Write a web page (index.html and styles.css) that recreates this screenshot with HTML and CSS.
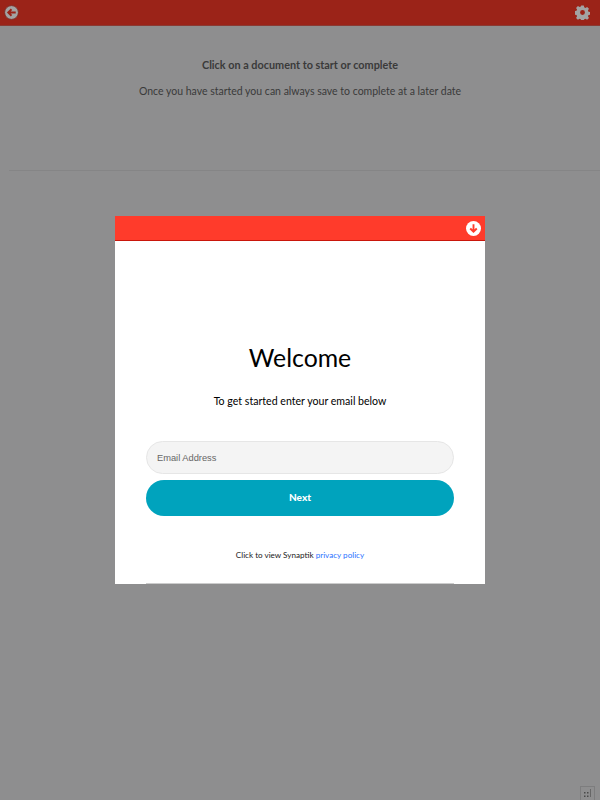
FILE: index.html
```html
<!DOCTYPE html>
<html lang="en">
<head>
    <meta charset="UTF-8">
    <meta name="viewport" content="width=device-width, initial-scale=1.0">
    <title>Documents</title>
    <link rel="stylesheet" href="styles.css">
</head>
<body>
    <div class="top-bar">
        <svg class="top-icon" width="15" height="15" viewBox="0 0 16 16">
            <circle cx="8" cy="8" r="7.4" fill="#a3a3a3" stroke="#7d2a22" stroke-width="1"/>
            <path d="M12.5 8H5M8 4.5L4.5 8L8 11.5" fill="none" stroke="#9b2318" stroke-width="2"/>
        </svg>
        <svg class="top-icon" width="15" height="15" viewBox="0 0 16 16">
            <path fill="#a3a3a3" fill-rule="evenodd" d="M6.6 0.5h2.8l.4 2 1.3.6 1.8-1.1 2 2-1.1 1.8.6 1.3 2 .4v2.8l-2 .4-.6 1.3 1.1 1.8-2 2-1.8-1.1-1.3.6-.4 2H6.6l-.4-2-1.3-.6-1.8 1.1-2-2 1.1-1.8-.6-1.3-2-.4V6.6l2-.4.6-1.3L1.1 3.1l2-2 1.8 1.1 1.3-.6zM8 5.4a2.6 2.6 0 1 0 0 5.2a2.6 2.6 0 0 0 0-5.2z"/>
        </svg>
    </div>

    <div class="intro">
        <p class="intro-title">Click on a document to start or complete</p>
        <p class="intro-sub">Once you have started you can always save to complete at a later date</p>
    </div>
    <div class="divider"></div>

    <div class="overlay">
        <div class="modal">
            <div class="modal-header">
                <svg width="15" height="15" viewBox="0 0 16 16">
                    <circle cx="8" cy="8" r="8" fill="#fff"/>
                    <path d="M8 3.5V11M4.5 8L8 11.5L11.5 8" fill="none" stroke="#ff3b2b" stroke-width="2"/>
                </svg>
            </div>
            <div class="modal-body">
                <h1>Welcome</h1>
                <p class="lead">To get started enter your email below</p>
                <input class="email" type="text" placeholder="Email Address">
                <button class="next">Next</button>
                <p class="privacy">Click to view Synaptik <a href="#">privacy policy</a></p>
            </div>
            <div class="modal-line"></div>
        </div>
    </div>

    <div class="corner">
        <svg width="13" height="13" viewBox="0 0 13 13">
            <path fill="#4a4a4a" d="M3 5h1.5v1.5H3zM6 5h1.5v1.5H6zM3 8.5h1.5V10H3zM6 8.5h1.5V10H6z"/>
            <path fill="#666" d="M9 2h1v8H9z"/>
        </svg>
    </div>
</body>
</html>
```

FILE: styles.css
```css
html, body {
    height: 100%;
}

body {
    margin: 0;
    background-color: #8e8e8f;
    font-family: Lato, "Open Sans", sans-serif;
    overflow: hidden;
}

.top-bar {
    display: flex;
    justify-content: space-between;
    align-items: center;
    height: 25px;
    padding: 0 10px 0 4px;
    background-color: #9b2318;
    border-bottom: 1px solid #8a3a33;
}

.top-icon {
    display: block;
}

.intro {
    padding-top: 32px;
    text-align: center;
    color: #3a3a3a;
}

.intro-title {
    margin: 0;
    font-size: 10.85px;
    line-height: 14px;
    font-weight: 700;
}

.intro-sub {
    margin: 12px 0 0 0;
    font-size: 10.5px;
    line-height: 14px;
}

.divider {
    height: 1px;
    margin: 72px 0 0 9px;
    background-color: #858586;
}

.overlay {
    position: fixed;
    top: 0;
    left: 0;
    right: 0;
    bottom: 0;
    display: flex;
    justify-content: center;
    align-items: center;
}

.modal {
    width: 370px;
    height: 368px;
    background-color: #fff;
    display: flex;
    flex-direction: column;
}

.modal-header {
    display: flex;
    justify-content: flex-end;
    align-items: center;
    height: 24px;
    padding: 0 4px;
    background-color: #ff3b2b;
    border-bottom: 1px solid #c9160b;
    flex: none;
}

.modal-body {
    flex: 1;
    display: flex;
    flex-direction: column;
    padding: 0 31px;
    text-align: center;
}

.modal-body h1 {
    margin: 102px 0 0 0;
    font-size: 24.8px;
    line-height: 30px;
    font-weight: 400;
    color: #000;
}

.lead {
    margin: 21px 0 0 0;
    font-size: 10.6px;
    line-height: 14px;
    color: #000;
}

.email {
    box-sizing: border-box;
    width: 100%;
    height: 33px;
    margin-top: 33px;
    padding: 0 10px;
    border: 1px solid #e6e6e6;
    border-radius: 17px;
    background-color: #f4f4f4;
    font-family: "Liberation Sans", Arial, sans-serif;
    font-size: 9.3px;
    outline: none;
}

.email::placeholder {
    color: #666;
}

.next {
    width: 100%;
    height: 36px;
    margin-top: 6px;
    padding: 0 0 2px 0;
    border: none;
    border-radius: 18px;
    background-color: #00a3bd;
    color: #fff;
    font-family: Lato, sans-serif;
    font-size: 10px;
    font-weight: 900;
}

.privacy {
    margin: 33px 0 0 0;
    font-size: 8.1px;
    line-height: 12px;
    color: #222;
}

.privacy a {
    color: #2a72ff;
    text-decoration: none;
}

.modal-line {
    height: 1px;
    margin: 0 31px;
    background-color: #ccc;
    flex: none;
}

.corner {
    position: fixed;
    right: 5px;
    bottom: 0;
    width: 15px;
    height: 14px;
    box-sizing: border-box;
    border: 1px solid #7d7d7e;
    border-bottom: none;
}

.corner svg {
    display: block;
}
```
